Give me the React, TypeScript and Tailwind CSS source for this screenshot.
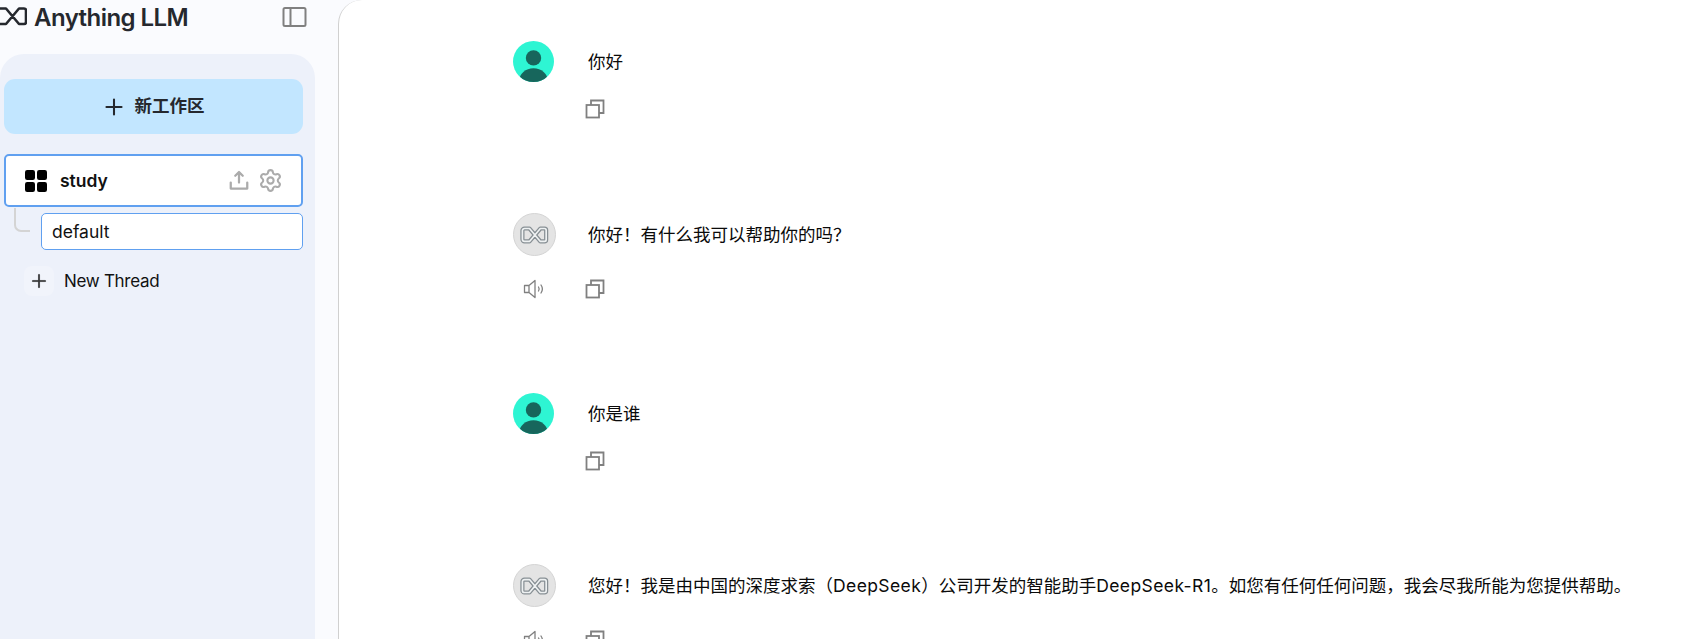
import type { ReactNode } from "react";
import { PiPlus, PiPlusBold, PiUploadSimpleBold } from "react-icons/pi";
import { Settings } from "lucide-react";

const font = { fontFamily: '"Inter", "Noto Sans CJK SC", sans-serif' };

const logoPath = "M1 8.5H7L20 24H25a2 2 0 0 0 2-2V10.5a2 2 0 0 0-2-2H20L7 24H1a2.5 2.5 0 0 1-2.5-2.5V11A2.5 2.5 0 0 1 1 8.5Z";

function Logo({ className }: { className?: string }) {
  return (
    <svg viewBox="-2 7 30 18.5" fill="none" stroke="currentColor" strokeWidth="2.6" strokeLinejoin="round" className={className}>
      <path d={logoPath} />
    </svg>
  );
}

function Copy() {
  return (
    <svg viewBox="0 0 20 20" fill="none" stroke="#808080" strokeWidth="1.8" className="h-5 w-5">
      <rect x="1.5" y="6" width="12.5" height="12.5" />
      <path d="M6 6V1.5h12.5V14H14" />
    </svg>
  );
}

function Speaker() {
  return (
    <svg viewBox="0 0 22 20" fill="none" stroke="#808080" strokeWidth="1.3" strokeLinejoin="round" strokeLinecap="round" className="h-5 w-[22px]">
      <path d="M1.5 6.5v7h4.5l6 5V1.5l-6 5H1.5ZM6 6.5v7" />
      <path d="M15.5 8a3.5 3.5 0 0 1 0 4M18 6a7 7 0 0 1 0 8" />
    </svg>
  );
}

function UserAvatar() {
  return (
    <svg viewBox="0 0 40 40" className="h-[41px] w-[41px] shrink-0">
      <defs>
        <clipPath id="uc"><circle cx="20" cy="20" r="20" /></clipPath>
      </defs>
      <g clipPath="url(#uc)">
        <rect width="40" height="40" fill="#2ef5d3" />
        <circle cx="20" cy="16.5" r="7.5" fill="#17665c" />
        <ellipse cx="20" cy="39" rx="14" ry="12.5" fill="#17665c" />
      </g>
    </svg>
  );
}

function BotAvatar() {
  return (
    <div className="flex h-[43px] w-[43px] shrink-0 items-center justify-center rounded-full border border-[#d4d4d4] bg-[#e4e4e4]">
      <svg viewBox="-2 7 30 18.5" fill="none" strokeLinejoin="round" className="h-[16px] w-[25px] overflow-visible blur-[0.5px]">
        <path d={logoPath} stroke="#878f94" strokeWidth="5" />
        <path d={logoPath} stroke="#eef1f2" strokeWidth="2" />
      </svg>
    </div>
  );
}

function Message({ bot, text, h }: { bot?: boolean; text: ReactNode; h: string }) {
  return (
    <div className={h}>
      <div className={bot ? "flex h-[43px] items-center" : "flex h-10 items-center"}>
        {bot ? <BotAvatar /> : <UserAvatar />}
        <p className={bot ? "ml-[32px] mt-[1px] text-[17.5px] whitespace-nowrap text-[#0a0a0a]" : "ml-[34px] mt-[2px] text-[17.5px] whitespace-nowrap text-[#0a0a0a]"}>{text}</p>
      </div>
      <div className={bot ? "mt-[23px] flex items-center" : "mt-[18px] flex items-center"}>
        {bot && <span className="ml-[10px] mr-[40px] flex"><Speaker /></span>}
        {!bot && <span className="ml-[72px] flex"><Copy /></span>}
        {bot && <Copy />}
      </div>
    </div>
  );
}

export default function App() {
  return (
    <div style={font} className="flex h-[639px] w-[1695px] overflow-hidden bg-[#fafbfe]">
      <aside className="flex w-[338px] shrink-0 flex-col">
        <header className="flex h-[54px] w-[315px] items-start">
          <Logo className="ml-[-3px] mt-[7px] h-[18.5px] w-[30px] shrink-0 text-[#25282e]" />
          <span className="ml-[7px] mt-[2px] text-[24px] leading-[32px] font-semibold tracking-[-0.55px] text-[#25282e]">Anything LLM</span>
          <svg viewBox="0 0 24 20" fill="none" stroke="#808080" strokeWidth="2" className="ml-auto mr-[8px] mt-[7px] h-[20px] w-[25px]">
            <rect x="1" y="1" width="22" height="18" rx="1.5" />
            <path d="M8 1v18" />
          </svg>
        </header>
        <div className="h-[585px] w-[315px] rounded-t-[24px] bg-[#edf1fa] pt-[25px] pl-[4px] pr-[12px]">
          <button className="flex h-[55px] w-[299px] items-center justify-center gap-[10px] rounded-[11px] bg-[#c2e6ff] text-[17.5px] font-bold text-[#25282e]">
            <PiPlusBold className="h-[22px] w-[22px]" />
            <span>新工作区</span>
          </button>
          <div className="mt-[20px] flex h-[53px] w-[299px] items-center rounded-[5px] border-2 border-[#60a0f0] bg-white pl-[19px] pr-[18px]">
            <svg viewBox="0 0 22 22" className="h-[22px] w-[22px] fill-black">
              <rect x="0" y="0" width="10" height="10" rx="2.2" />
              <rect x="12" y="0" width="10" height="10" rx="2.2" />
              <rect x="0" y="12" width="10" height="10" rx="2.2" />
              <rect x="12" y="12" width="10" height="10" rx="2.2" />
            </svg>
            <span className="ml-[13px] mt-[2px] text-[17.5px] font-semibold text-[#111]">study</span>
            <PiUploadSimpleBold className="ml-auto h-[24px] w-[24px] text-[#ababab]" />
            <Settings className="ml-[7px] h-[25px] w-[25px] text-[#ababab]" strokeWidth={2} />
          </div>
          <div className="relative mt-[6px] flex h-[37px] w-[299px] items-center">
            <span className="ml-[10px] mt-[-24px] h-[24px] w-[16px] rounded-bl-[7px] border-b-2 border-l-2 border-[#d4d4d4]" />
            <span className="ml-[11px] flex h-[37px] w-[262px] items-center rounded-[5px] border border-[#60a0f0] bg-white pl-[10px] pt-[1px] text-[17.5px] text-[#111]">default</span>
          </div>
          <div className="mt-[16px] flex items-center pl-[20px]">
            <span className="flex h-[30px] w-[30px] items-center justify-center rounded-[8px] bg-[#f1f4fb]">
              <PiPlus className="h-[18px] w-[18px] text-[#222] stroke-[8]" />
            </span>
            <span className="ml-[10px] mt-[1px] text-[17px] tracking-[-0.3px] text-[#111]">New Thread</span>
          </div>
        </div>
      </aside>
      <main className="flex-1 rounded-tl-[24px] border-l border-[#d0d0d0] bg-white pl-[174px] pt-[41px]">
        <Message text="你好" h="h-[172px]" />
        <Message bot text="你好！有什么我可以帮助你的吗？" h="h-[180px]" />
        <Message text="你是谁" h="h-[171px]" />
        <Message
          bot
          text={
            <>
              您好！我是由中国的深度求索（<span className="tracking-[0.4px]">DeepSeek</span>）公司开发的智能助手<span className="tracking-[0.4px]">DeepSeek-R1</span>。如您有任何任何问题，我会尽我所能为您提供帮助。
            </>
          }
          h="h-[100px]"
        />
      </main>
    </div>
  );
}
